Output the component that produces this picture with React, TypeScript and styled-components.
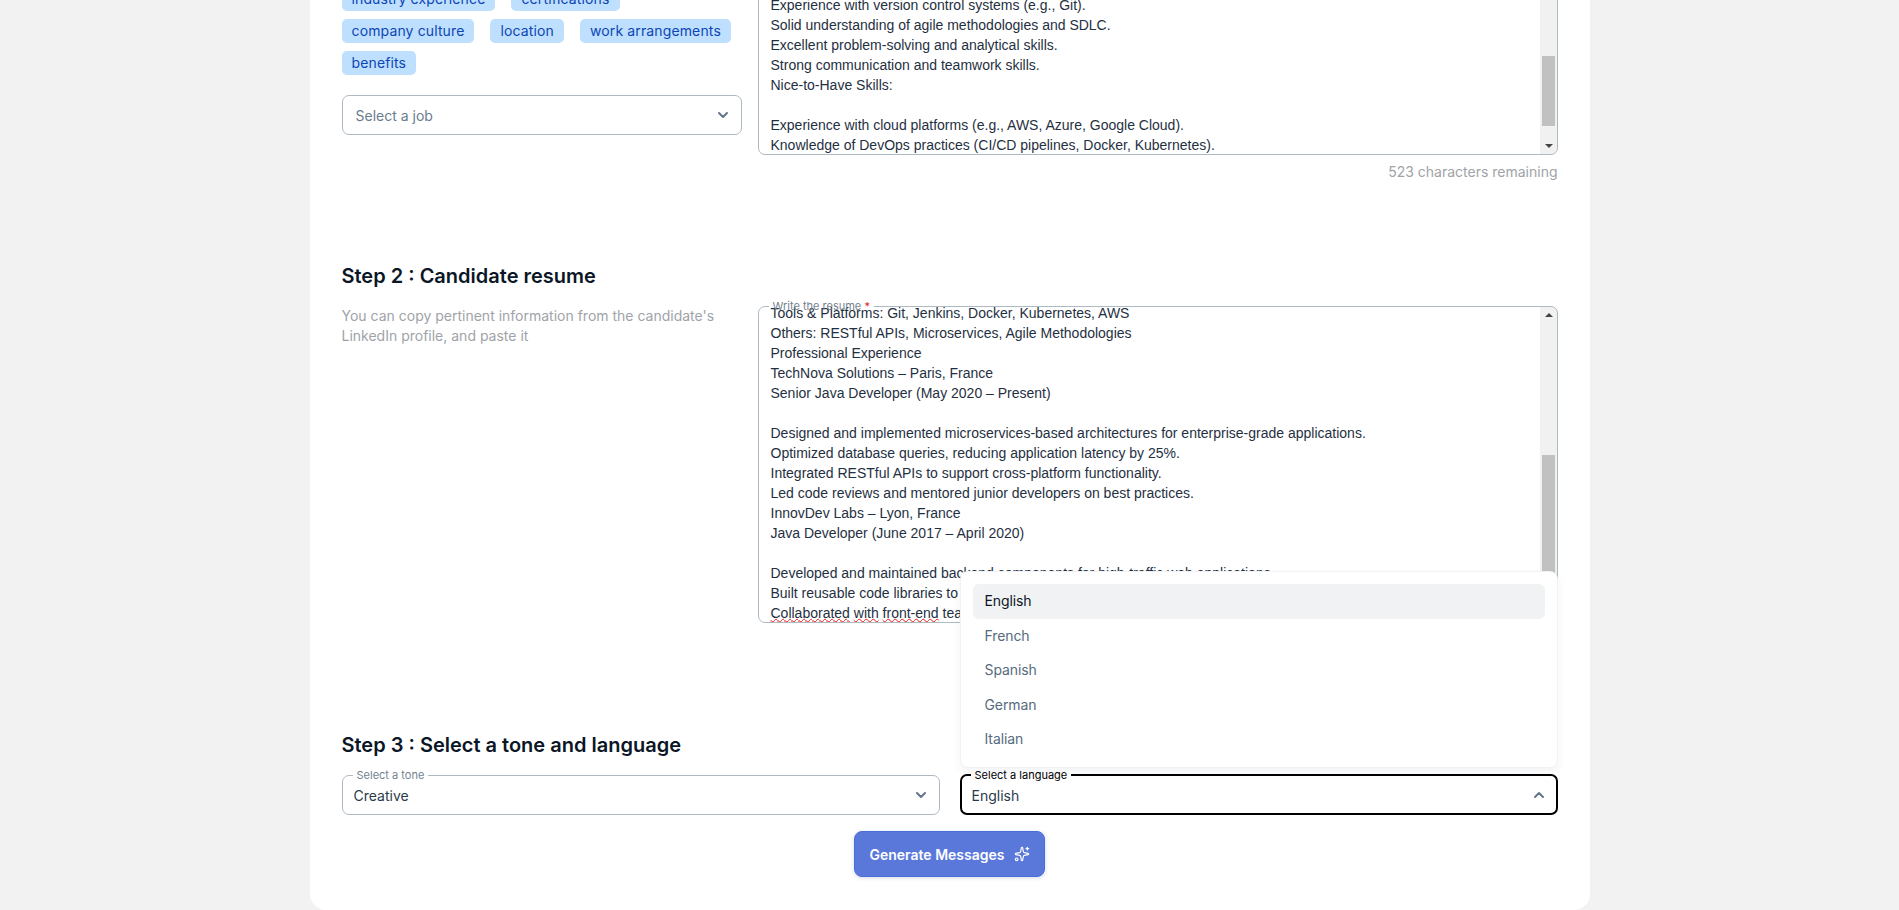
import React from "react";
import styled, { createGlobalStyle } from "styled-components";
import { ChevronDown, ChevronUp, Sparkles } from "lucide-react";

const GlobalStyle = createGlobalStyle`
  html, body {
    margin: 0;
    padding: 0;
    height: 910px;
    overflow: hidden;
    background: #f2f2f2;
    font-family: Inter, "Liberation Sans", sans-serif;
  }
`;

const Page = styled.div`
  height: 910px;
  overflow: hidden;
  display: flex;
  flex-direction: column;
  justify-content: flex-end;
  align-items: center;
`;
const Card = styled.main`
  width: 1280px;
  box-sizing: border-box;
  flex-shrink: 0;
  background: #fff;
  border-radius: 0 0 16px 16px;
  padding: 0 32px 33px;
  display: flex;
  flex-direction: column;
`;
const StepRow = styled.section`
  display: grid;
  grid-template-columns: 400px 800px;
  column-gap: 16px;
`;
const LeftColumn = styled.div<{ $end?: boolean }>`
  display: flex;
  flex-direction: column;
  justify-content: ${(p) => (p.$end ? "flex-end" : "flex-start")};
  padding-bottom: ${(p) => (p.$end ? "47px" : "0")};
`;
const RightColumn = styled.div`
  display: flex;
  flex-direction: column;
`;
const TagList = styled.div`
  display: flex;
  flex-wrap: wrap;
  gap: 8px 16px;
  margin-bottom: 20px;
`;
const Tag = styled.span`
  height: 24px;
  line-height: 24px;
  padding: 0 10px;
  border-radius: 5px;
  background: #bfdfff;
  color: #0b46b4;
  font-size: 14px;
  font-weight: 400;
  letter-spacing: 0.13px;
`;
const Heading = styled.h2<{ $top: number }>`
  margin: ${(p) => p.$top}px 0 16px;
  height: 28px;
  line-height: 28px;
  font-size: 20px;
  font-weight: 600;
  color: #0b1626;
`;
const Hint = styled.p`
  margin: 0;
  font-size: 14px;
  line-height: 20px;
  color: #a0a3a8;
`;
const Field = styled.div<{ $height: number }>`
  position: relative;
  height: ${(p) => p.$height}px;
`;
const TextClip = styled.div`
  height: 100%;
  box-sizing: border-box;
  padding: 0 1px 0 13px;
  overflow: hidden;
  border-radius: 7px;
  display: flex;
  flex-direction: column;
  justify-content: flex-end;
`;
const TextLine = styled.div`
  flex-shrink: 0;
  height: 20px;
  line-height: 20px;
  font-family: "Liberation Sans", Arial, sans-serif;
  font-size: 14px;
  color: #1f3042;
  white-space: pre;
`;
const Misspelled = styled.span`
  text-decoration: underline wavy #f01818;
  text-decoration-thickness: 1px;
  text-underline-offset: 0;
`;
const Outline = styled.fieldset<{ $focused?: boolean }>`
  position: absolute;
  inset: -6px 0 0 0;
  margin: 0;
  padding: 0 0 0 ${(p) => (p.$focused ? "9px" : "10px")};
  min-width: 0;
  pointer-events: none;
  border: ${(p) => (p.$focused ? "2px solid #000" : "1px solid #adbac4")};
  border-radius: 7px;
  color: ${(p) => (p.$focused ? "#000" : "#74838f")};
`;
const Legend = styled.legend`
  height: 12px;
  line-height: 12px;
  padding: 0 4px;
  font-size: 11px;
  white-space: nowrap;
  &:empty {
    padding: 0;
  }
`;
const Required = styled.span`
  color: #e02424;
`;
const Scrollbar = styled.div`
  position: absolute;
  top: 1px;
  right: 1px;
  bottom: 1px;
  width: 17px;
  background: #f1f1f1;
  border-radius: 0 6px 6px 0;
`;
const Thumb = styled.div<{ $top: number; $height: number }>`
  position: absolute;
  left: 2px;
  right: 2px;
  top: ${(p) => p.$top}px;
  height: ${(p) => p.$height}px;
  background: #c1c1c1;
`;
const Arrow = styled.div<{ $up?: boolean }>`
  position: absolute;
  left: 5px;
  ${(p) => (p.$up ? "top: 6px;" : "bottom: 6px;")}
  width: 0;
  height: 0;
  border-left: 4px solid transparent;
  border-right: 4px solid transparent;
  ${(p) => (p.$up ? "border-bottom: 4px solid #444;" : "border-top: 4px solid #444;")}
`;
const Counter = styled.div`
  margin-top: 7px;
  height: 20px;
  line-height: 20px;
  text-align: right;
  font-size: 14px;
  color: #a0a3a8;
`;
const SelectBox = styled.div<{ $inset?: number }>`
  position: relative;
  height: 40px;
  box-sizing: border-box;
  padding: 0 11px 0 ${(p) => p.$inset ?? 12}px;
  display: flex;
  align-items: center;
  justify-content: space-between;
  color: #64748b;
`;
const SelectValue = styled.span<{ $placeholder?: boolean }>`
  font-size: 14px;
  color: ${(p) => (p.$placeholder ? "#6b7c8f" : "#2b3a4b")};
`;
const SelectGrid = styled.div`
  position: relative;
  display: grid;
  grid-template-columns: 1fr 1fr;
  column-gap: 20px;
`;
const Menu = styled.ul`
  position: absolute;
  right: 0;
  bottom: 47px;
  width: 598px;
  height: 197px;
  box-sizing: border-box;
  margin: 0;
  padding: 12px 12px 0 12px;
  list-style: none;
  background: #fff;
  border: 1px solid #f0f2f5;
  border-radius: 8px;
  box-shadow: 0 4px 10px rgba(30, 50, 80, 0.06);
  z-index: 2;
`;
const MenuItem = styled.li<{ $active?: boolean }>`
  height: 34.5px;
  line-height: 34px;
  padding-left: 12px;
  border-radius: 6px;
  font-size: 14px;
  letter-spacing: -0.1px;
  background: ${(p) => (p.$active ? "#f1f2f4" : "transparent")};
  color: ${(p) => (p.$active ? "#0b1626" : "#566b7d")};
`;
const Actions = styled.div`
  display: flex;
  justify-content: center;
  margin-top: 16px;
`;
const GenerateButton = styled.button`
  width: 191px;
  height: 46px;
  padding: 0;
  display: flex;
  align-items: center;
  justify-content: center;
  gap: 9px;
  border: 1px solid #4a6ddd;
  border-radius: 8px;
  background: #5a78d9;
  color: #fff;
  font-family: inherit;
  font-size: 14px;
  font-weight: 600;
  box-shadow: 0 1px 4px rgba(30, 50, 80, 0.18);
`;

const requirementLines = [
  "Experience with version control systems (e.g., Git).",
  "Solid understanding of agile methodologies and SDLC.",
  "Excellent problem-solving and analytical skills.",
  "Strong communication and teamwork skills.",
  "Nice-to-Have Skills:",
  " ",
  "Experience with cloud platforms (e.g., AWS, Azure, Google Cloud).",
  "Knowledge of DevOps practices (CI/CD pipelines, Docker, Kubernetes).",
];

const resumeLines = [
  "Tools & Platforms: Git, Jenkins, Docker, Kubernetes, AWS",
  "Others: RESTful APIs, Microservices, Agile Methodologies",
  "Professional Experience",
  "TechNova Solutions – Paris, France",
  "Senior Java Developer (May 2020 – Present)",
  " ",
  "Designed and implemented microservices-based architectures for enterprise-grade applications.",
  "Optimized database queries, reducing application latency by 25%.",
  "Integrated RESTful APIs to support cross-platform functionality.",
  "Led code reviews and mentored junior developers on best practices.",
  "InnovDev Labs – Lyon, France",
  "Java Developer (June 2017 – April 2020)",
  " ",
  "Developed and maintained backend components for high-traffic web applications.",
  "Built reusable code libraries to speed up development across projects.",
];

const tags = [
  "industry experience",
  "certifications",
  "company culture",
  "location",
  "work arrangements",
  "benefits",
];

const languages = ["English", "French", "Spanish", "German", "Italian"];

const App: React.FC = () => {
  return (
    <Page>
      <GlobalStyle />
      <Card>
        <StepRow>
          <LeftColumn $end>
            <TagList>
              {tags.map((tag) => (
                <Tag key={tag}>{tag}</Tag>
              ))}
            </TagList>
            <SelectBox $inset={14}>
              <SelectValue $placeholder>Select a job</SelectValue>
              <ChevronDown size={16} strokeWidth={3} />
              <Outline>
                <Legend />
              </Outline>
            </SelectBox>
          </LeftColumn>
          <RightColumn>
            <Field $height={260}>
              <TextClip>
                {requirementLines.map((line, i) => (
                  <TextLine key={i}>{line}</TextLine>
                ))}
              </TextClip>
              <Scrollbar>
                <Arrow $up />
                <Thumb $top={160} $height={70} />
                <Arrow />
              </Scrollbar>
              <Outline>
                <Legend />
              </Outline>
            </Field>
            <Counter>523 characters remaining</Counter>
          </RightColumn>
        </StepRow>

        <Heading $top={80}>Step 2 : Candidate resume</Heading>
        <StepRow>
          <LeftColumn>
            <Hint>You can copy pertinent information from the candidate's LinkedIn profile, and paste it</Hint>
          </LeftColumn>
          <RightColumn>
            <Field $height={317}>
              <TextClip>
                {resumeLines.map((line, i) => (
                  <TextLine key={i}>{line}</TextLine>
                ))}
                <TextLine>
                  <Misspelled>Collaborated</Misspelled> <Misspelled>with</Misspelled>{" "}
                  <Misspelled>front-end</Misspelled> teams to deliver features on schedule.
                </TextLine>
              </TextClip>
              <Scrollbar>
                <Arrow $up />
                <Thumb $top={148} $height={170} />
                <Arrow />
              </Scrollbar>
              <Outline>
                <Legend>
                  Write the resume <Required>*</Required>
                </Legend>
              </Outline>
            </Field>
          </RightColumn>
        </StepRow>

        <Heading $top={108}>Step 3 : Select a tone and language</Heading>
        <SelectGrid>
          <SelectBox>
            <SelectValue>Creative</SelectValue>
            <ChevronDown size={16} strokeWidth={3} />
            <Outline>
              <Legend>Select a tone</Legend>
            </Outline>
          </SelectBox>
          <SelectBox>
            <SelectValue>English</SelectValue>
            <ChevronUp size={16} strokeWidth={3} />
            <Outline $focused>
              <Legend>Select a language</Legend>
            </Outline>
          </SelectBox>
          <Menu>
            {languages.map((language) => (
              <MenuItem key={language} $active={language === "English"}>
                {language}
              </MenuItem>
            ))}
          </Menu>
        </SelectGrid>
        <Actions>
          <GenerateButton>
            Generate Messages
            <Sparkles size={16} strokeWidth={1.75} />
          </GenerateButton>
        </Actions>
      </Card>
    </Page>
  );
};

export default App;
